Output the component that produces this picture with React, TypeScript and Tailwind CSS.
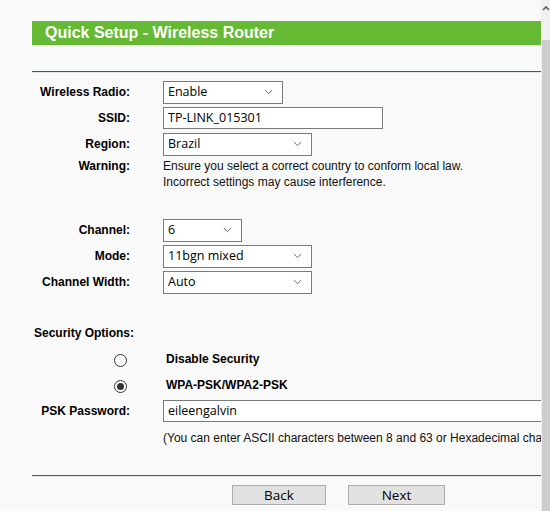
import React from "react";

const Chevron = () => (
  <svg width="9" height="6" viewBox="0 0 9 6" className="shrink-0">
    <polyline points="0.8,1 4.5,4.6 8.2,1" fill="none" stroke="#6a6a6a" strokeWidth="1" />
  </svg>
);

function Select({ value, w }: { value: string; w: string }) {
  return (
    <div
      className={`${w} h-[23px] border border-[#7a7a7a] bg-white flex items-center justify-between pl-[4px] pr-[9px] text-[12.5px] text-black`}
      style={{ fontFamily: '"Open Sans", sans-serif' }}
    >
      <span className="leading-none">{value}</span>
      <Chevron />
    </div>
  );
}

function TextBox({ value, w }: { value: string; w: string }) {
  return (
    <div
      className={`${w} h-[22px] border border-[#7a7a7a] bg-white flex items-center pl-[4px] text-[12.5px] text-black overflow-hidden whitespace-nowrap`}
      style={{ fontFamily: '"Open Sans", sans-serif' }}
    >
      {value}
    </div>
  );
}

function Row({ label, children, h = "h-[26px]" }: { label: string; children: React.ReactNode; h?: string }) {
  return (
    <div className={`flex items-center ${h}`}>
      <div className="w-[100px] text-right font-bold text-[12px] text-black shrink-0">{label}</div>
      <div className="ml-[33px] flex items-center">{children}</div>
    </div>
  );
}

function Radio({ checked }: { checked?: boolean }) {
  return (
    <div className="w-[13px] h-[13px] rounded-full border border-[#333] bg-white flex items-center justify-center">
      {checked && <div className="w-[7px] h-[7px] rounded-full bg-[#333]" />}
    </div>
  );
}

export default function App() {
  return (
    <div
      className="w-[550px] h-[511px] bg-[#f9f9f9] flex overflow-hidden"
      style={{ fontFamily: '"Liberation Sans", Arial, sans-serif' }}
    >
      <div className="w-[541px] shrink-0 pl-[32px] pt-[21px] overflow-hidden">
        <div className="h-[24px] bg-[#66b933] flex items-center pl-[13px]">
          <span className="text-white font-bold text-[16px] leading-none">Quick Setup - Wireless Router</span>
        </div>
        <div className="h-[26px]" />
        <div className="h-[1px] bg-[#2b6a3a]" />
        <div className="h-[1px] bg-[#dfe9e1]" />
        <div className="pt-[6px] -ml-[2px]">
          <Row label="Wireless Radio:">
            <Select value="Enable" w="w-[120px]" />
          </Row>
          <Row label="SSID:">
            <TextBox value="TP-LINK_015301" w="w-[220px]" />
          </Row>
          <Row label="Region:">
            <Select value="Brazil" w="w-[149px]" />
          </Row>
          <div className="flex items-start pt-[1px] leading-[16px]">
            <div className="w-[100px] text-right font-bold text-[12px] text-black shrink-0">Warning:</div>
            <div className="ml-[33px] text-[12px] text-[#111]">
              <div>Ensure you select a correct country to conform local law.</div>
              <div>Incorrect settings may cause interference.</div>
            </div>
          </div>
          <div className="h-[27px]" />
          <Row label="Channel:">
            <Select value="6" w="w-[79px]" />
          </Row>
          <Row label="Mode:">
            <Select value="11bgn mixed" w="w-[149px]" />
          </Row>
          <Row label="Channel Width:">
            <Select value="Auto" w="w-[149px]" />
          </Row>
          <div className="h-[25px]" />
          <div className="h-[26px] flex items-center pl-[4px] font-bold text-[12px] text-black">Security Options:</div>
          <div className="h-[26px] flex items-center">
            <div className="w-[100px] shrink-0 flex justify-end pr-[3px] pt-[3px]">
              <Radio />
            </div>
            <div className="ml-[36px] font-bold text-[12px] text-black">Disable Security</div>
          </div>
          <div className="h-[26px] flex items-center">
            <div className="w-[100px] shrink-0 flex justify-end pr-[3px] pt-[3px]">
              <Radio checked />
            </div>
            <div className="ml-[36px] font-bold text-[12px] text-black">WPA-PSK/WPA2-PSK</div>
          </div>
          <Row label="PSK Password:">
            <TextBox value="eileengalvin" w="w-[400px]" />
          </Row>
          <div className="flex items-center h-[28px]">
            <div className="w-[100px] shrink-0" />
            <div className="ml-[33px] text-[12px] text-[#111] whitespace-nowrap">
              (You can enter ASCII characters between 8 and 63 or Hexadecimal characters between 8 and 64.)
            </div>
          </div>
        </div>
        <div className="h-[23px]" />
        <div className="h-[1px] bg-[#2b7a45]" />
        <div className="h-[1px] bg-[#dfe9e1]" />
        <div className="pt-[8px] flex pl-[200px] gap-[22px]">
          <div
            className="w-[94px] h-[20px] bg-[#e1e1e1] border border-[#adadad] flex items-center justify-center text-[13.5px] text-black"
            style={{ fontFamily: '"Open Sans", sans-serif' }}
          >
            Back
          </div>
          <div
            className="w-[97px] h-[20px] bg-[#e1e1e1] border border-[#adadad] flex items-center justify-center text-[13.5px] text-black"
            style={{ fontFamily: '"Open Sans", sans-serif' }}
          >
            Next
          </div>
        </div>
      </div>
      <div className="w-[9px] shrink-0 bg-[#f0f0f0] flex flex-col">
        <div className="h-[40px] flex justify-center pt-[5px]">
          <svg width="8" height="6" viewBox="0 0 8 6">
            <polyline points="1,5 4,2 7,5" fill="none" stroke="#606060" strokeWidth="1.6" />
          </svg>
        </div>
        <div className="flex-1 bg-[#cdcdcd] ml-[1px]" />
      </div>
    </div>
  );
}
